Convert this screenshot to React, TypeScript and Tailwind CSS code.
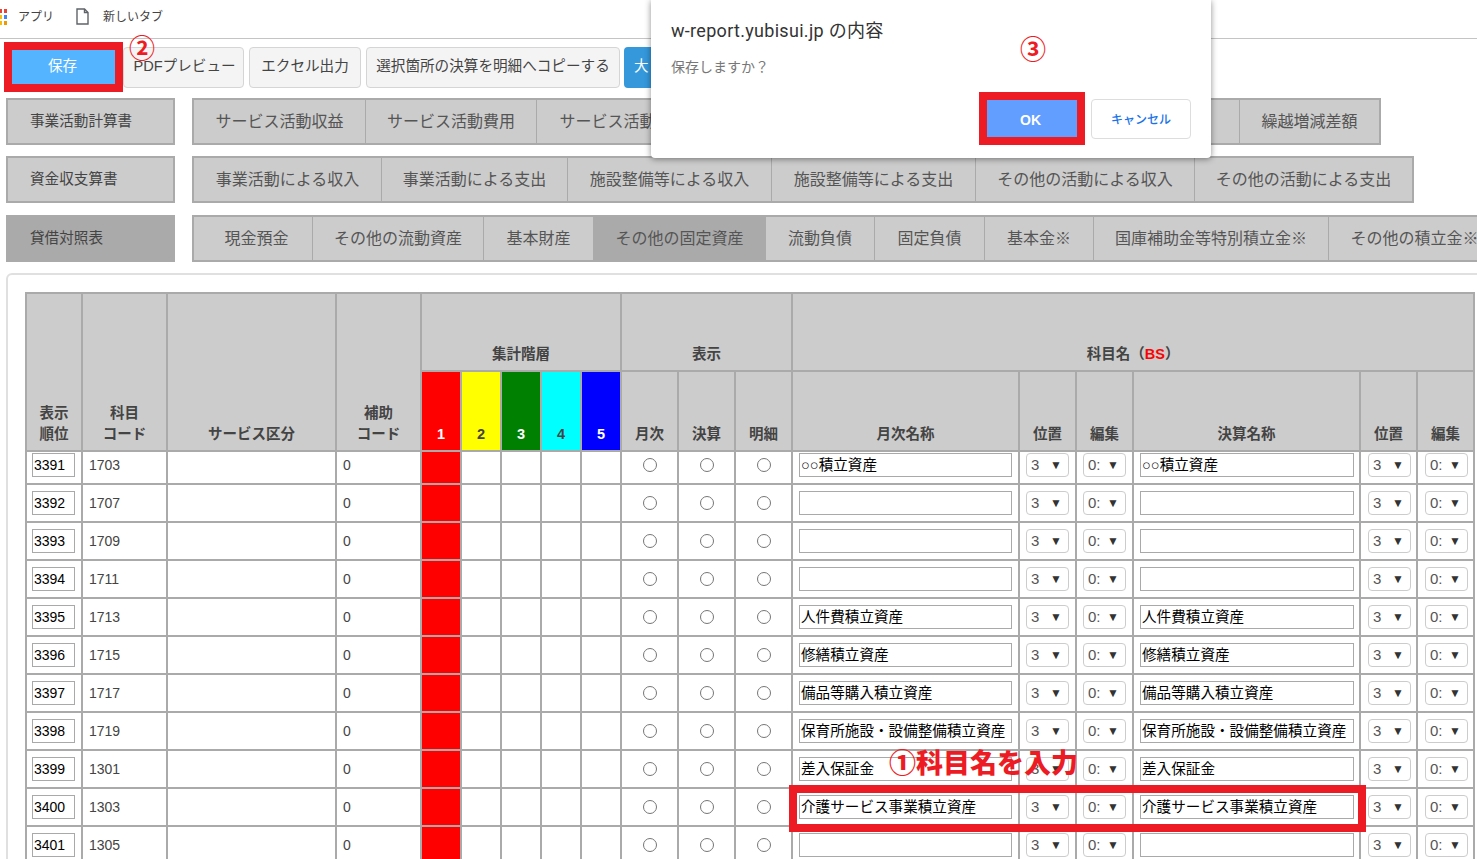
import React from "react";

const sans = "font-['Liberation_Sans','Noto_Sans_CJK_JP',sans-serif]";

const tabRows = [
  {
    label: "事業活動計算書",
    active: false,
    tabs: [
      { text: "サービス活動収益", w: "w-[171px]" },
      { text: "サービス活動費用", w: "w-[171px]" },
      { text: "サービス活動外収益", w: "w-[190px]" },
      { text: "サービス活動外費用", w: "w-[190px]" },
      { text: "特別収益", w: "w-[110px]" },
      { text: "固定資産売却損等", w: "w-[213px]" },
      { text: "繰越増減差額", w: "w-[140px]" },
    ],
  },
  {
    label: "資金収支算書",
    active: false,
    tabs: [
      { text: "事業活動による収入", w: "w-[187px]" },
      { text: "事業活動による支出", w: "w-[186px]" },
      { text: "施設整備等による収入", w: "w-[204px]" },
      { text: "施設整備等による支出", w: "w-[204px]" },
      { text: "その他の活動による収入", w: "w-[219px]" },
      { text: "その他の活動による支出", w: "w-[218px]" },
    ],
  },
  {
    label: "貸借対照表",
    active: true,
    tabs: [
      { text: "現金預金", w: "w-[118px] pl-[7px]" },
      { text: "その他の流動資産", w: "w-[171px]" },
      { text: "基本財産", w: "w-[110px]" },
      { text: "その他の固定資産", w: "w-[172px]", active: true },
      { text: "流動負債", w: "w-[109px]" },
      { text: "固定負債", w: "w-[110px]" },
      { text: "基本金※", w: "w-[109px]" },
      { text: "国庫補助金等特別積立金※", w: "w-[235px]" },
      { text: "その他の積立金※", w: "w-[172px]" },
    ],
  },
];

const rows = [
  { order: "3391", code: "1703", name: "○○積立資産" },
  { order: "3392", code: "1707", name: "" },
  { order: "3393", code: "1709", name: "" },
  { order: "3394", code: "1711", name: "" },
  { order: "3395", code: "1713", name: "人件費積立資産" },
  { order: "3396", code: "1715", name: "修繕積立資産" },
  { order: "3397", code: "1717", name: "備品等購入積立資産" },
  { order: "3398", code: "1719", name: "保育所施設・設備整備積立資産" },
  { order: "3399", code: "1301", name: "差入保証金" },
  { order: "3400", code: "1303", name: "介護サービス事業積立資産" },
  { order: "3401", code: "1305", name: "" },
];

const widths = [56, 85, 169, 85, 40, 40, 40, 40, 40, 57, 57, 57, 227, 57, 57, 227, 57, 57];

const Th = ({ children, className = "", ...rest }: React.ThHTMLAttributes<HTMLTableCellElement>) => (
  <th
    {...rest}
    className={`border-2 border-[#aaaaaa] bg-[#cccccc] align-bottom pb-[5px] text-center text-[14.5px] leading-[21px] font-bold text-[#444444] ${className}`}
  >
    {children}
  </th>
);

const Td = ({ children, first, className = "" }: { children?: React.ReactNode; first: boolean; className?: string }) => (
  <td className={`border-2 border-[#aaaaaa] p-0 align-middle ${first ? "pb-[5px]" : ""} ${className}`}>{children}</td>
);

const Pick = ({ value, className = "ml-[6px]" }: { value: string; className?: string }) => (
  <div className={`relative h-[24px] w-[43px] ${className}`}>
    <select
      defaultValue={value}
      className="block h-[24px] w-[43px] appearance-none rounded-[4px] border border-[#cccccc] bg-white pl-[4px] text-[15px] text-[#555555]"
    >
      <option value={value}>{value}</option>
    </select>
    <span className="pointer-events-none absolute top-0 left-[24px] text-[12px] leading-[24px] text-[#333333]">▼</span>
  </div>
);

const NameInput = ({ value, className }: { value: string; className: string }) => (
  <input
    type="text"
    defaultValue={value}
    className={`block h-[24px] border border-[#a9a9a9] bg-white pb-[4px] pl-[1px] text-[14.6px] text-black ${className}`}
  />
);

const Radio = () => <input type="radio" className="mx-auto block h-[14px] w-[14px]" />;

const ToolButton = ({ children, className = "" }: { children: React.ReactNode; className?: string }) => (
  <button className={`h-[41px] rounded-[4px] border border-[#d5d5d5] bg-[#f4f4f4] text-[14.6px] text-[#444444] ${className}`}>
    {children}
  </button>
);

export default function App() {
  return (
    <div className={`relative h-[859px] w-[1477px] overflow-hidden bg-white ${sans}`}>
      {/* bookmarks bar */}
      <div className="flex h-[39px] items-center border-b border-[#c4c4c4] pb-[5px] text-[12px] text-[#444444]">
        <svg width="7" height="16" viewBox="0 0 7 16" className="shrink-0">
          <rect x="0" y="0" width="2" height="4" fill="#ea4335" />
          <rect x="4" y="0" width="3" height="4" fill="#ea4335" />
          <rect x="0" y="6" width="2" height="4" fill="#fbbc05" />
          <rect x="4" y="6" width="3" height="4" fill="#4285f4" />
          <rect x="0" y="12" width="2" height="4" fill="#fbbc05" />
          <rect x="4" y="12" width="3" height="4" fill="#f29900" />
        </svg>
        <span className="ml-[11px]">アプリ</span>
        <svg width="13" height="17" viewBox="0 0 13 17" className="ml-[22px] shrink-0" fill="none" stroke="#5f6368" strokeWidth="1.4">
          <path d="M1 1h7.5l3.5 3.5V16H1z" />
          <path d="M8.5 1v3.5H12" />
        </svg>
        <span className="ml-[14px]">新しいタブ</span>
      </div>

      {/* toolbar */}
      <div className="mt-[3px] flex h-[50px] items-center pl-[4px]">
        <div className="flex h-[50px] w-[119px] items-center justify-center border-8 border-[#ed1c24] bg-[#54b4ff] pr-[2px] text-[14.6px] text-white">
          保存
        </div>
        <ToolButton className="w-[121px] pl-[2px]">PDFプレビュー</ToolButton>
        <ToolButton className="ml-[5px] w-[112px]">エクセル出力</ToolButton>
        <ToolButton className="ml-[5px] w-[254px]">選択箇所の決算を明細へコピーする</ToolButton>
        <button className="ml-[4px] h-[41px] w-[160px] rounded-[4px] bg-[#3498db] pl-[10px] text-left text-[14.6px] text-white">
          大
        </button>
      </div>

      {/* statement tabs */}
      <div className="mt-[6px] flex flex-col gap-[11px] pl-[6px]">
        {tabRows.map((row) => (
          <div key={row.label} className={`flex h-[47px] gap-[17px] ${row.active ? "mt-[1px]" : ""}`}>
            <div
              className={`flex w-[169px] shrink-0 items-center border-2 pl-[22px] text-[14.6px] text-[#444444] ${
                row.active ? "border-[#aaaaaa] bg-[#aaaaaa]" : "border-[#aaaaaa] bg-[#cccccc]"
              }`}
            >
              {row.label}
            </div>
            <div className="flex shrink-0 border-2 border-[#aaaaaa] bg-[#cccccc]">
              {row.tabs.map((tab, i) => (
                <div
                  key={tab.text}
                  className={`flex shrink-0 items-center justify-center whitespace-nowrap text-[16px] text-[#555555] ${tab.w} ${
                    i > 0 ? "border-l border-[#aaaaaa]" : ""
                  } ${"active" in tab && tab.active ? "bg-[#aaaaaa]" : ""}`}
                >
                  {tab.text}
                </div>
              ))}
            </div>
          </div>
        ))}
      </div>

      {/* main panel */}
      <div className="mt-[11px] ml-[6px] w-[1500px] rounded-[6px] border-2 border-[#e0e0e0] pt-[17px] pl-[17px]">
        <table className="w-[1450px] table-fixed border-collapse bg-white">
          <colgroup>
            {widths.map((w, i) => (
              <col key={i} style={{ width: w }} />
            ))}
          </colgroup>
          <thead>
            <tr className="h-[78px]">
              <Th rowSpan={2}>表示<br />順位</Th>
              <Th rowSpan={2}>科目<br />コード</Th>
              <Th rowSpan={2}>サービス区分</Th>
              <Th rowSpan={2}>補助<br />コード</Th>
              <Th colSpan={5}>集計階層</Th>
              <Th colSpan={3}>表示</Th>
              <Th colSpan={6}>科目名（<span className="text-[#ff0000]">BS</span>）</Th>
            </tr>
            <tr className="h-[80px]">
              <Th className="!bg-[#ff0000] !text-white">1</Th>
              <Th className="!bg-[#ffff00]">2</Th>
              <Th className="!bg-[#008000] !text-white">3</Th>
              <Th className="!bg-[#00ffff]">4</Th>
              <Th className="!bg-[#0000ff] !text-white">5</Th>
              <Th>月次</Th>
              <Th>決算</Th>
              <Th>明細</Th>
              <Th>月次名称</Th>
              <Th>位置</Th>
              <Th>編集</Th>
              <Th>決算名称</Th>
              <Th>位置</Th>
              <Th>編集</Th>
            </tr>
          </thead>
          <tbody className="text-[14px] text-[#444444]">
            {rows.map((row, i) => {
              const first = i === 0;
              return (
                <tr key={row.order} className={first ? "h-[33px]" : "h-[38px]"}>
                  <Td first={first}>
                    <input
                      type="text"
                      defaultValue={row.order}
                      className="ml-[5px] block h-[24px] w-[43px] border border-[#a9a9a9] bg-white pl-[1px] text-[14px] text-black"
                    />
                  </Td>
                  <Td first={first} className="pl-[6px]">{row.code}</Td>
                  <Td first={first} />
                  <Td first={first} className="pl-[6px]">0</Td>
                  <Td first={first} className="bg-[#ff0000]" />
                  <Td first={first} />
                  <Td first={first} />
                  <Td first={first} />
                  <Td first={first} />
                  <Td first={first}><Radio /></Td>
                  <Td first={first}><Radio /></Td>
                  <Td first={first}><Radio /></Td>
                  <Td first={first}><NameInput value={row.name} className="ml-[6px] w-[213px]" /></Td>
                  <Td first={first}><Pick value="3" /></Td>
                  <Td first={first}><Pick value="0:" /></Td>
                  <Td first={first}><NameInput value={row.name} className="ml-[6px] w-[214px]" /></Td>
                  <Td first={first}><Pick value="3" className="ml-[7px]" /></Td>
                  <Td first={first}><Pick value="0:" className="ml-[7px]" /></Td>
                </tr>
              );
            })}
          </tbody>
        </table>
      </div>

      {/* save confirm dialog */}
      <div className="absolute top-0 left-[651px] h-[158px] w-[560px] rounded-b-[4px] bg-white shadow-[0_1px_6px_rgba(0,0,0,0.45)]">
        <div className="absolute top-[19px] left-[20px] font-['Roboto','Noto_Sans_CJK_JP',sans-serif] text-[18px] leading-[24px] tracking-[0.3px] text-[#333333]">
          w-report.yubisui.jp の内容
        </div>
        <div className="absolute top-[56px] left-[20px] text-[14px] leading-[22px] text-[#777777]">保存しますか？</div>
        <div className="absolute top-[92px] left-[328px] flex h-[53px] w-[106px] items-center justify-center border-8 border-[#ed1c24] bg-[#619eff] pt-[3px] pr-[3px] text-[14px] font-bold text-white">
          OK
        </div>
        <button className="absolute top-[99px] left-[440px] h-[40px] w-[100px] rounded-[4px] border border-[#dddddd] bg-white pt-[2px] text-[12px] font-medium text-[#1a73e8]">
          キャンセル
        </button>
      </div>

      {/* red call-outs */}
      <span className="absolute top-[32px] left-[129px] text-[26px] leading-[34px] font-bold text-[#ed1c24]">②</span>
      <span className="absolute top-[33px] left-[1020px] text-[26px] leading-[34px] font-bold text-[#ed1c24]">③</span>
      <span className="absolute top-[744px] left-[889px] text-[27px] leading-[40px] font-black whitespace-nowrap text-[#ed1c24]">
        ①科目名を入力
      </span>
      <div className="absolute top-[785px] left-[789px] h-[47px] w-[577px] border-8 border-[#ed1c24]" />
    </div>
  );
}
